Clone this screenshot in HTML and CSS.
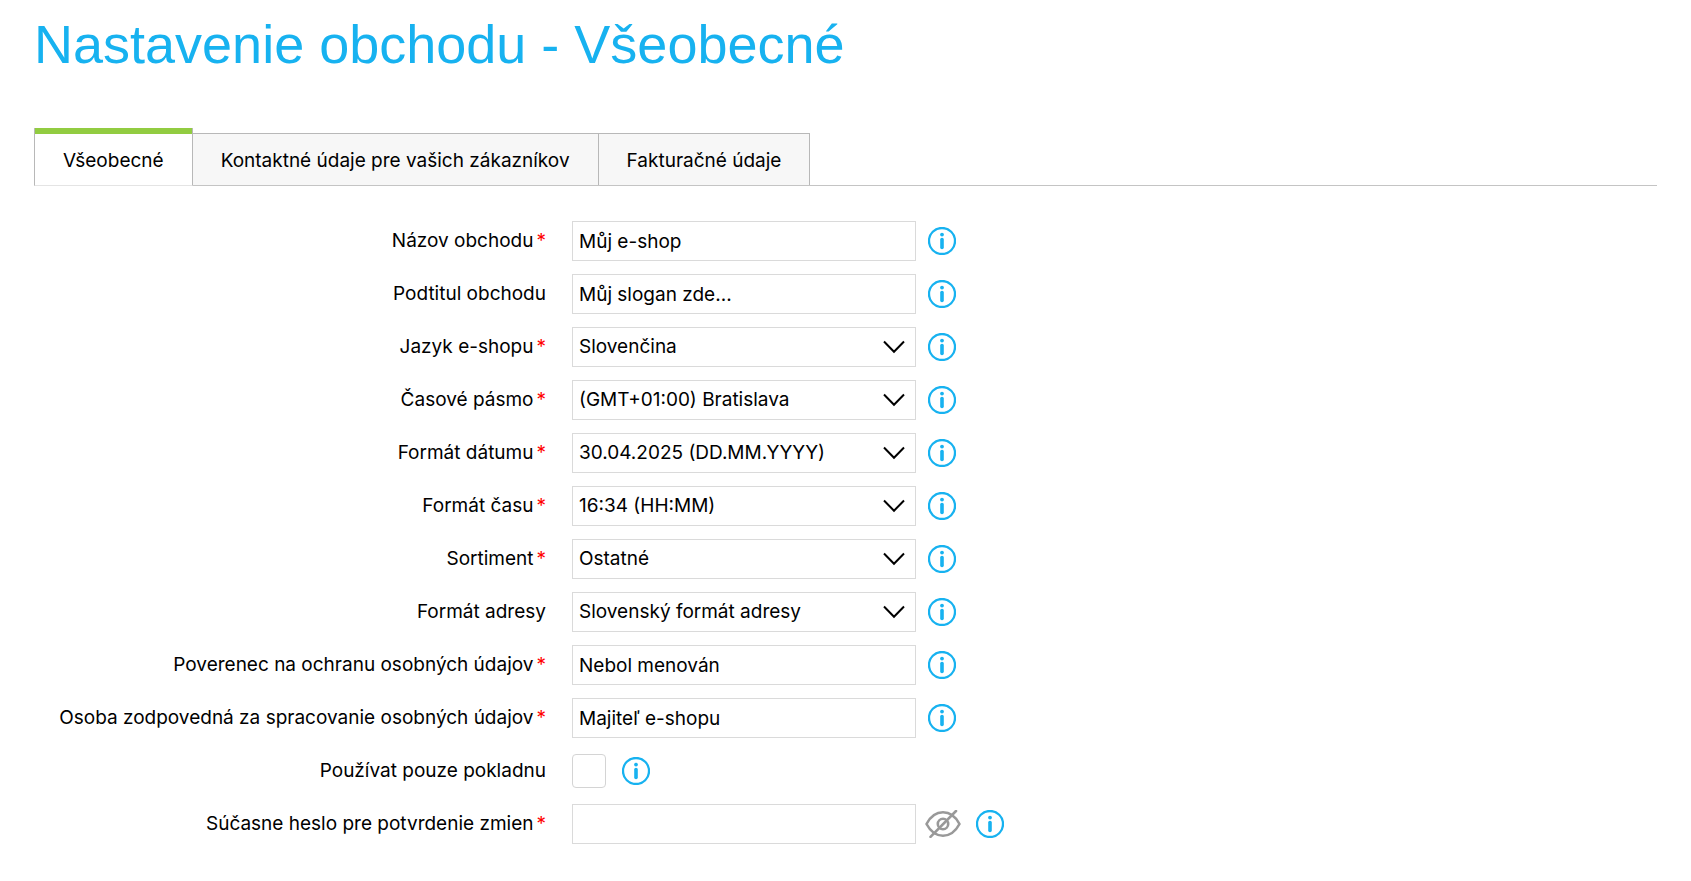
FILE: index.html
```html
<!DOCTYPE html>
<html lang="sk">
<head>
<meta charset="utf-8">
<meta name="viewport" content="width=device-width, initial-scale=1">
<title>Nastavenie obchodu - Všeobecné</title>
<link rel="stylesheet" href="styles.css">
</head>
<body>
<svg class="sprite" aria-hidden="true">
  <symbol id="icon-info" viewBox="0 0 28 28">
    <circle cx="14" cy="14" r="13" fill="none" stroke="currentColor" stroke-width="2.3"/>
    <circle cx="14" cy="7.6" r="1.9" fill="currentColor"/>
    <path d="M14 12.6v7.800" fill="none" stroke="currentColor" stroke-width="3.6" stroke-linecap="round"/>
  </symbol>
  <symbol id="icon-chevron" viewBox="0 0 22 14">
    <path d="M1 1.500 11 11.700 21 1.500" fill="none" stroke="currentColor" stroke-width="2"/>
  </symbol>
  <symbol id="icon-eye-off" viewBox="0 0 36 28">
    <path d="M1.500 14C5.500 6.500 11.500 2.300 18 2.300S30.500 6.500 34.500 14C30.500 21.500 24.500 25.700 18 25.700S5.500 21.500 1.500 14Z" fill="none" stroke="currentColor" stroke-width="2.6" stroke-linejoin="round"/>
    <circle cx="18" cy="14" r="5.200" fill="none" stroke="currentColor" stroke-width="2.600"/>
    <path d="M5.500 26.800 31 1" fill="none" stroke="currentColor" stroke-width="2.600" stroke-linecap="round"/>
  </symbol>
</svg>
<main class="page">
  <h1 class="title">Nastavenie obchodu - Všeobecné</h1>
  <nav class="tabs">
    <a class="tab tab-active" href="#vseobecne" aria-current="page">Všeobecné</a>
    <a class="tab" href="#kontakt">Kontaktné údaje pre vašich zákazníkov</a>
    <a class="tab" href="#fakturacia">Fakturačné údaje</a>
  </nav>
  <form class="form">
    <div class="row">
      <label class="label" for="name">Názov obchodu<span class="required">*</span></label>
      <input class="field" id="name" type="text" value="Můj e-shop">
      <button class="info" type="button" aria-label="Info"><svg class="icon"><use href="#icon-info"/></svg></button>
    </div>
    <div class="row">
      <label class="label" for="subtitle">Podtitul obchodu</label>
      <input class="field" id="subtitle" type="text" value="Můj slogan zde...">
      <button class="info" type="button" aria-label="Info"><svg class="icon"><use href="#icon-info"/></svg></button>
    </div>
    <div class="row">
      <label class="label" for="lang">Jazyk e-shopu<span class="required">*</span></label>
      <div class="select"><select class="field" id="lang"><option>Slovenčina</option></select><svg class="chevron"><use href="#icon-chevron"/></svg></div>
      <button class="info" type="button" aria-label="Info"><svg class="icon"><use href="#icon-info"/></svg></button>
    </div>
    <div class="row">
      <label class="label" for="zone">Časové pásmo<span class="required">*</span></label>
      <div class="select"><select class="field" id="zone"><option>(GMT+01:00) Bratislava</option></select><svg class="chevron"><use href="#icon-chevron"/></svg></div>
      <button class="info" type="button" aria-label="Info"><svg class="icon"><use href="#icon-info"/></svg></button>
    </div>
    <div class="row">
      <label class="label" for="date">Formát dátumu<span class="required">*</span></label>
      <div class="select"><select class="field" id="date"><option>30.04.2025 (DD.MM.YYYY)</option></select><svg class="chevron"><use href="#icon-chevron"/></svg></div>
      <button class="info" type="button" aria-label="Info"><svg class="icon"><use href="#icon-info"/></svg></button>
    </div>
    <div class="row">
      <label class="label" for="time">Formát času<span class="required">*</span></label>
      <div class="select"><select class="field" id="time"><option>16:34 (HH:MM)</option></select><svg class="chevron"><use href="#icon-chevron"/></svg></div>
      <button class="info" type="button" aria-label="Info"><svg class="icon"><use href="#icon-info"/></svg></button>
    </div>
    <div class="row">
      <label class="label" for="range">Sortiment<span class="required">*</span></label>
      <div class="select"><select class="field" id="range"><option>Ostatné</option></select><svg class="chevron"><use href="#icon-chevron"/></svg></div>
      <button class="info" type="button" aria-label="Info"><svg class="icon"><use href="#icon-info"/></svg></button>
    </div>
    <div class="row">
      <label class="label" for="address">Formát adresy</label>
      <div class="select"><select class="field" id="address"><option>Slovenský formát adresy</option></select><svg class="chevron"><use href="#icon-chevron"/></svg></div>
      <button class="info" type="button" aria-label="Info"><svg class="icon"><use href="#icon-info"/></svg></button>
    </div>
    <div class="row">
      <label class="label" for="officer">Poverenec na ochranu osobných údajov<span class="required">*</span></label>
      <input class="field" id="officer" type="text" value="Nebol menován">
      <button class="info" type="button" aria-label="Info"><svg class="icon"><use href="#icon-info"/></svg></button>
    </div>
    <div class="row">
      <label class="label" for="person">Osoba zodpovedná za spracovanie osobných údajov<span class="required">*</span></label>
      <input class="field" id="person" type="text" value="Majiteľ e-shopu">
      <button class="info" type="button" aria-label="Info"><svg class="icon"><use href="#icon-info"/></svg></button>
    </div>
    <div class="row">
      <label class="label" for="checkout">Používat pouze pokladnu</label>
      <input class="check" id="checkout" type="checkbox">
      <button class="info" type="button" aria-label="Info"><svg class="icon"><use href="#icon-info"/></svg></button>
    </div>
    <div class="row">
      <label class="label" for="password">Súčasne heslo pre potvrdenie zmien<span class="required">*</span></label>
      <input class="field" id="password" type="password">
      <button class="reveal" type="button" aria-label="Zobraziť heslo"><svg class="icon"><use href="#icon-eye-off"/></svg></button>
      <button class="info" type="button" aria-label="Info"><svg class="icon"><use href="#icon-info"/></svg></button>
    </div>
  </form>
</main>
</body>
</html>
```
FILE: styles.css
```css
* {
  box-sizing: border-box;
}

body {
  margin: 0;
  background: #fff;
  color: #000;
  font: 19px/24px Inter, "Liberation Sans", sans-serif;
}

.sprite {
  display: none;
}

.page {
  padding: 12px 34px;
}

.title {
  margin: 0;
  color: #17b2f0;
  font: 400 54px/64px "Liberation Sans", Arial, sans-serif;
}

.tabs {
  display: flex;
  align-items: flex-end;
  margin-top: 52px;
  border-bottom: 1px solid #c4c4c4;
}

.tab {
  padding: 15px 28px 12px;
  border: 1px solid #b8b8b8;
  border-width: 1px 1px 0 0;
  background: #f7f7f7;
  color: #000;
  text-decoration: none;
}

.tab-active {
  margin-bottom: -1px;
  border-width: 0 1px 1px;
  border-bottom-color: #e4e4e4;
  background: linear-gradient(#92cc41 6px, #fff 6px) border-box;
  padding-top: 21px;
}

.form {
  display: flex;
  flex-direction: column;
  gap: 13px;
  padding-top: 35px;
}

.row {
  display: flex;
  align-items: center;
  min-height: 40px;
}

.label {
  flex: 0 1 512px;
  margin-right: 26px;
  text-align: right;
}

.required {
  margin-left: 3px;
  color: #f00;
}

.field {
  width: 344px;
  height: 40px;
  margin: 0;
  padding: 0 6px;
  border: 1px solid #dadada;
  border-radius: 0;
  background: #fff;
  color: #000;
  font: inherit;
  appearance: none;
}

.select {
  display: grid;
  align-items: center;
}

.select .field,
.chevron {
  grid-area: 1 / 1;
}

.chevron {
  justify-self: end;
  width: 22px;
  height: 14px;
  margin-right: 11px;
  pointer-events: none;
}

.check {
  width: 34px;
  height: 34px;
  margin: 0 4px 0 0;
  border: 1px solid #d4d4d4;
  border-radius: 4px;
  background: #fff;
  appearance: none;
}

.check:checked {
  background: #17b2f0;
}

.info,
.reveal {
  margin: 0 0 0 12px;
  padding: 0;
  border: 0;
  background: none;
  color: #17b2f0;
  cursor: pointer;
}

.info {
  width: 28px;
  height: 28px;
}

.reveal {
  width: 36px;
  height: 28px;
  margin: 0 3px 0 9px;
  color: #999;
}

.icon {
  display: block;
  width: 100%;
  height: 100%;
}
```
